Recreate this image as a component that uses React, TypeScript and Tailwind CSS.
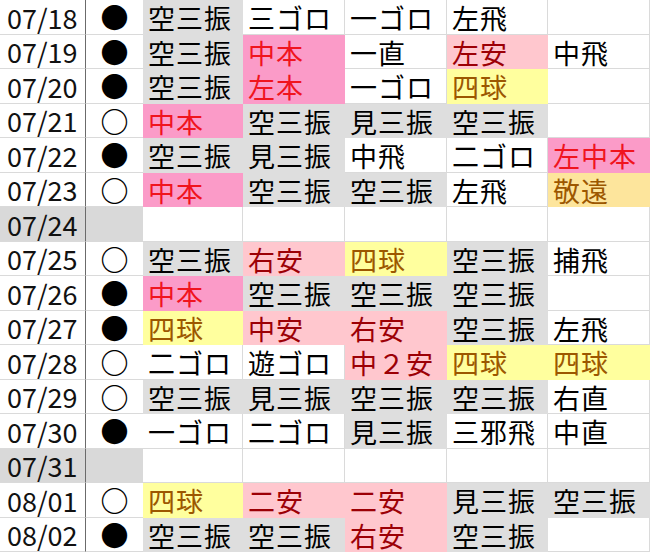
import React from "react";

type Kind = "n" | "k" | "hr" | "h" | "bb" | "ibb";
type Cell = [string, Kind] | null;
type Row = { d: string; r: "w" | "l" | null; c: Cell[] };

const K = (t: string): Cell => [t, "k"];
const N = (t: string): Cell => [t, "n"];
const HR = (t: string): Cell => [t, "hr"];
const H = (t: string): Cell => [t, "h"];
const BB = (t: string): Cell => [t, "bb"];
const IBB = (t: string): Cell => [t, "ibb"];

const rows: Row[] = [
  { d: "07/18", r: "l", c: [K("空三振"), N("三ゴロ"), N("一ゴロ"), N("左飛"), null] },
  { d: "07/19", r: "l", c: [K("空三振"), HR("中本"), N("一直"), H("左安"), N("中飛")] },
  { d: "07/20", r: "l", c: [K("空三振"), HR("左本"), N("一ゴロ"), BB("四球"), null] },
  { d: "07/21", r: "w", c: [HR("中本"), K("空三振"), K("見三振"), K("空三振"), null] },
  { d: "07/22", r: "l", c: [K("空三振"), K("見三振"), N("中飛"), N("二ゴロ"), HR("左中本")] },
  { d: "07/23", r: "w", c: [HR("中本"), K("空三振"), K("空三振"), N("左飛"), IBB("敬遠")] },
  { d: "07/24", r: null, c: [null, null, null, null, null] },
  { d: "07/25", r: "w", c: [K("空三振"), H("右安"), BB("四球"), K("空三振"), N("捕飛")] },
  { d: "07/26", r: "l", c: [HR("中本"), K("空三振"), K("空三振"), K("空三振"), null] },
  { d: "07/27", r: "l", c: [BB("四球"), H("中安"), H("右安"), K("空三振"), N("左飛")] },
  { d: "07/28", r: "w", c: [N("二ゴロ"), N("遊ゴロ"), H("中２安"), BB("四球"), BB("四球")] },
  { d: "07/29", r: "w", c: [K("空三振"), K("見三振"), K("空三振"), K("空三振"), N("右直")] },
  { d: "07/30", r: "l", c: [N("一ゴロ"), N("二ゴロ"), K("見三振"), N("三邪飛"), N("中直")] },
  { d: "07/31", r: null, c: [null, null, null, null, null] },
  { d: "08/01", r: "w", c: [BB("四球"), H("二安"), H("二安"), K("見三振"), K("空三振")] },
  { d: "08/02", r: "l", c: [K("空三振"), K("空三振"), H("右安"), K("空三振"), null] },
];

const style: Record<Kind, string> = {
  n: "bg-white text-black border-[#dadada]",
  k: "bg-[#dedede] text-black border-[#dedede]",
  hr: "bg-[#fb9bc8] text-[#f0141e] border-[#fb9bc8]",
  h: "bg-[#ffc7ce] text-[#9c0006] border-[#ffc7ce]",
  bb: "bg-[#ffff9e] text-[#9c5700] border-[#ffff9e]",
  ibb: "bg-[#fde59c] text-[#9c5700] border-[#fde59c]",
};

export default function App() {
  return (
    <div
      className="w-[650px] h-[552px] bg-white overflow-hidden grid grid-cols-[86px_57px_100px_102px_102px_101px_102px] grid-rows-[repeat(16,1fr)]"
      style={{ fontFamily: '"Noto Sans CJK JP", "Noto Sans", sans-serif' }}
    >
      {rows.map((row) => {
        const off = row.r === null;
        return (
          <React.Fragment key={row.d}>
            <div
              className={`flex items-center pl-[7px] pt-[2px] text-[27px] leading-[28px] text-[#111] border-b border-r border-b-[#dadada] border-r-[#6b6b6b] ${
                off ? "bg-[#d9d9d9]" : "bg-white"
              }`}
            >
              {row.d}
            </div>
            <div
              className={`flex items-center justify-center pt-[1px] text-[28px] font-bold leading-[28px] text-black border-b ${
                off ? "bg-[#d9d9d9] border-[#d9d9d9]" : "bg-white border-[#dadada]"
              }`}
            >
              {row.r === "l" ? "●" : row.r === "w" ? "○" : ""}
            </div>
            {row.c.map((cell, i) => {
              const kind: Kind = cell ? cell[1] : "n";
              return (
                <div
                  key={i}
                  className={`flex items-center pl-[5px] pt-[3px] text-[27px] leading-[28px] tracking-[1px] whitespace-nowrap border-b border-r ${style[kind]}`}
                >
                  {cell ? cell[0] : ""}
                </div>
              );
            })}
          </React.Fragment>
        );
      })}
    </div>
  );
}
